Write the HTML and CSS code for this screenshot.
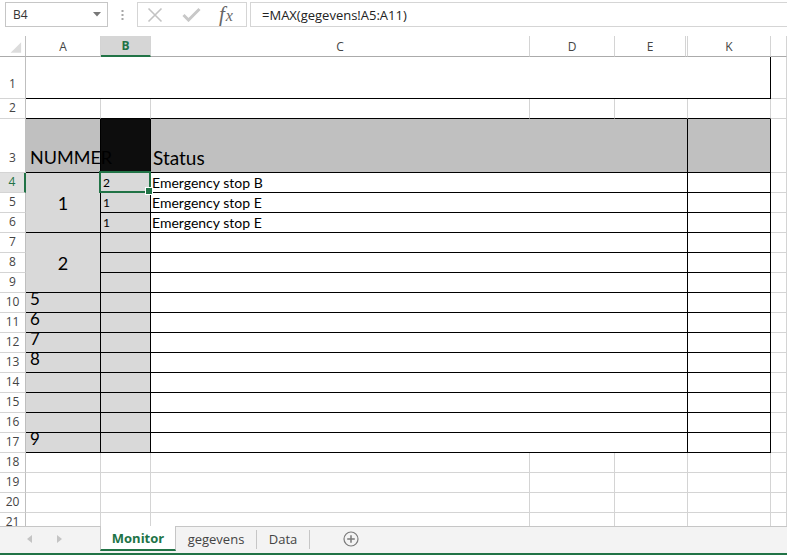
FILE: index.html
```html
<!DOCTYPE html>
<html>
<head>
<meta charset="utf-8">
<link rel="stylesheet" href="styles.css">
</head>
<body>
<div class="app">
  <div class="fbar">
    <div class="namebox"><span>B4</span>
      <svg width="8" height="5" viewBox="0 0 8 5"><polygon points="0,0 8,0 4,4.5" fill="#777"/></svg>
    </div>
    <div class="dots">
      <svg width="3" height="10" viewBox="0 0 3 10"><rect x="0.5" y="0" width="2" height="2" fill="#a6a6a6"/><rect x="0.5" y="4" width="2" height="2" fill="#a6a6a6"/><rect x="0.5" y="8" width="2" height="2" fill="#a6a6a6"/></svg>
    </div>
    <div class="fxbox">
      <svg class="ic-x" width="16" height="16" viewBox="0 0 16 16"><path d="M1.5 1.5 L14.5 14.5 M14.5 1.5 L1.5 14.5" stroke="#c3c3c3" stroke-width="1.6" fill="none"/></svg>
      <svg class="ic-ok" width="19" height="15" viewBox="0 0 19 15"><path d="M1.5 8 L6.5 13 L17.5 2" stroke="#c8c8c8" stroke-width="3" fill="none"/></svg>
      <span class="fx"><i class="f">f</i><i class="x">x</i></span>
    </div>
    <div class="finput">=MAX(gegevens!A5:A11)</div>
  </div>

  <div class="sheet">
    <div class="ch corner"><svg width="26" height="20" viewBox="0 0 26 20"><polygon points="22,6 22,17 11,17" fill="#dcdcdc"/></svg></div>
    <div class="ch">A</div>
    <div class="ch sel">B</div>
    <div class="ch">C</div>
    <div class="ch">D</div>
    <div class="ch">E</div>
    <div class="ch"></div>
    <div class="ch">K</div>
    <div class="ch"></div>

    <div class="rh tall">1</div>
    <div class="c span7 br bb"></div>
    <div class="c"></div>

    <div class="rh">2</div>
    <div class="c bb"></div>
    <div class="c bb"></div>
    <div class="c bb"></div>
    <div class="c bb"></div>
    <div class="c span2 bb"></div>
    <div class="c bb"></div>
    <div class="c"></div>

    <div class="rh tall">3</div>
    <div class="c hd br bb h19 nm over">NUMMER</div>
    <div class="c blk br bb"></div>
    <div class="c hd span4 br bb h19 st">Status</div>
    <div class="c hd br bb"></div>
    <div class="c"></div>

    <div class="rh sel">4</div>
    <div class="c g rs3 br bb mid">1</div>
    <div class="c g br bb sm selcell">2</div>
    <div class="c span4 br bb t14">Emergency stop B</div>
    <div class="c br bb"></div>
    <div class="c"></div>

    <div class="rh">5</div>
    <div class="c g br bb sm">1</div>
    <div class="c span4 br bb t14">Emergency stop E</div>
    <div class="c br bb"></div>
    <div class="c"></div>

    <div class="rh">6</div>
    <div class="c g br bb sm">1</div>
    <div class="c span4 br bb t14">Emergency stop E</div>
    <div class="c br bb"></div>
    <div class="c"></div>

    <div class="rh">7</div>
    <div class="c g rs3 br bb mid">2</div>
    <div class="c g br bb"></div>
    <div class="c span4 br bb"></div>
    <div class="c br bb"></div>
    <div class="c"></div>

    <div class="rh">8</div>
    <div class="c g br bb"></div>
    <div class="c span4 br bb"></div>
    <div class="c br bb"></div>
    <div class="c"></div>

    <div class="rh">9</div>
    <div class="c g br bb"></div>
    <div class="c span4 br bb"></div>
    <div class="c br bb"></div>
    <div class="c"></div>

    <div class="rh">10</div>
    <div class="c g br bb n17">5</div>
    <div class="c g br bb"></div>
    <div class="c span4 br bb"></div>
    <div class="c br bb"></div>
    <div class="c"></div>

    <div class="rh">11</div>
    <div class="c g br bb n17">6</div>
    <div class="c g br bb"></div>
    <div class="c span4 br bb"></div>
    <div class="c br bb"></div>
    <div class="c"></div>

    <div class="rh">12</div>
    <div class="c g br bb n17">7</div>
    <div class="c g br bb"></div>
    <div class="c span4 br bb"></div>
    <div class="c br bb"></div>
    <div class="c"></div>

    <div class="rh">13</div>
    <div class="c g br bb n17">8</div>
    <div class="c g br bb"></div>
    <div class="c span4 br bb"></div>
    <div class="c br bb"></div>
    <div class="c"></div>

    <div class="rh">14</div>
    <div class="c g br bb"></div>
    <div class="c g br bb"></div>
    <div class="c span4 br bb"></div>
    <div class="c br bb"></div>
    <div class="c"></div>

    <div class="rh">15</div>
    <div class="c g br bb"></div>
    <div class="c g br bb"></div>
    <div class="c span4 br bb"></div>
    <div class="c br bb"></div>
    <div class="c"></div>

    <div class="rh">16</div>
    <div class="c g br bb"></div>
    <div class="c g br bb"></div>
    <div class="c span4 br bb"></div>
    <div class="c br bb"></div>
    <div class="c"></div>

    <div class="rh">17</div>
    <div class="c g br bb n17">9</div>
    <div class="c g br bb"></div>
    <div class="c span4 br bb"></div>
    <div class="c br bb"></div>
    <div class="c"></div>

    <div class="rh">18</div>
    <div class="c"></div><div class="c"></div><div class="c"></div><div class="c"></div><div class="c span2"></div><div class="c"></div><div class="c"></div>
    <div class="rh">19</div>
    <div class="c"></div><div class="c"></div><div class="c"></div><div class="c"></div><div class="c span2"></div><div class="c"></div><div class="c"></div>
    <div class="rh">20</div>
    <div class="c"></div><div class="c"></div><div class="c"></div><div class="c"></div><div class="c span2"></div><div class="c"></div><div class="c"></div>
    <div class="rh">21</div>
    <div class="c"></div><div class="c"></div><div class="c"></div><div class="c"></div><div class="c span2"></div><div class="c"></div><div class="c"></div>
  </div>

  <div class="tabs">
    <div class="nav">
      <svg width="6" height="8" viewBox="0 0 6 8"><polygon points="5,0 5,8 0,4" fill="#c4c4c4"/></svg>
      <svg width="6" height="8" viewBox="0 0 6 8"><polygon points="1,0 1,8 6,4" fill="#c4c4c4"/></svg>
    </div>
    <div class="tab active">Monitor</div>
    <div class="tab t-geg">gegevens</div>
    <div class="sep"></div>
    <div class="tab t-data">Data</div>
    <div class="sep"></div>
    <div class="add">
      <svg width="16" height="16" viewBox="0 0 16 16"><circle cx="8" cy="8" r="7" stroke="#7a7a7a" stroke-width="1.2" fill="none"/><path d="M8 4.2 V11.8 M4.2 8 H11.8" stroke="#7a7a7a" stroke-width="1.5"/></svg>
    </div>
  </div>
</div>
</body>
</html>
```

FILE: styles.css
```css
* { box-sizing: border-box; }

body {
  margin: 0;
  width: 787px;
  height: 555px;
  overflow: hidden;
  background: #fff;
  font-family: "Open Sans", "Noto Sans", sans-serif;
}

.app {
  display: flex;
  flex-direction: column;
  height: 555px;
}

/* formula bar */
.fbar {
  flex: none;
  height: 36px;
  display: flex;
  align-items: flex-start;
  padding-top: 2px;
}

.namebox {
  margin-left: 5px;
  width: 103px;
  height: 25px;
  border: 1px solid #c6c6c6;
  display: flex;
  align-items: center;
  justify-content: space-between;
  padding: 0 6px 0 7px;
  font-size: 12px;
  color: #333;
}

.dots {
  width: 29px;
  height: 25px;
  display: flex;
  align-items: center;
  justify-content: center;
}

.fxbox {
  width: 110px;
  height: 25px;
  border: 1px solid #d5d5d5;
  display: flex;
  align-items: center;
}

.ic-x { margin-left: 9px; }
.ic-ok { margin-left: 19px; }

.fx {
  margin-left: 18px;
  font-family: "Liberation Serif", "DejaVu Serif", serif;
  color: #666;
  display: flex;
  align-items: baseline;
  line-height: 1;
}
.fx .f { font-size: 21px; }
.fx .x { font-size: 16px; margin-left: 1px; }

.finput {
  margin-left: 3px;
  flex: 1;
  height: 25px;
  border: 1px solid #d5d5d5;
  border-right: none;
  padding-left: 11px;
  display: flex;
  align-items: center;
  font-size: 13px;
  color: #222;
}

/* sheet grid */
.sheet {
  flex: none;
  height: 490px;
  overflow: hidden;
  display: grid;
  grid-template-columns: 26px 75px 50px 379px 85px 71px 2px 83px 1fr;
  grid-template-rows: 21px 42px 20px 54px repeat(18, 20px);
}

.ch {
  display: flex;
  align-items: center;
  justify-content: center;
  font-size: 12px;
  color: #444;
  border-right: 1px solid #d4d4d4;
  border-bottom: 1px solid #ababab;
}
.ch.corner { border-right-color: #bfbfbf; }
.ch.sel {
  background: #d6d6d6;
  color: #217346;
  font-weight: 700;
  border-bottom: 2px solid #217346;
}

.rh {
  display: flex;
  align-items: flex-end;
  justify-content: center;
  font-size: 12px;
  line-height: 20px;
  color: #444;
  border-right: 1px solid #bfbfbf;
  border-bottom: 1px solid #d4d4d4;
}
.rh.tall { padding-bottom: 4px; }
.rh.sel {
  background: #e1e1e1;
  color: #217346;
  border-right: 2px solid #217346;
}

.c {
  font-family: Lato, "Liberation Sans", sans-serif;
  color: #000;
  display: flex;
  align-items: flex-end;
  padding-left: 2px;
  white-space: nowrap;
  min-width: 0;
  border-right: 1px solid #d4d4d4;
  border-bottom: 1px solid #d4d4d4;
}

.br { border-right-color: #000; }
.bb { border-bottom-color: #000; }

.span2 { grid-column: span 2; }
.span4 { grid-column: span 4; }
.span7 { grid-column: span 7; }
.rs3 { grid-row: span 3; }

.hd { background: #c0c0c0; }
.blk { background: #0d0d0d; }
.g { background: #d9d9d9; }

.h19 {
  font-size: 19px;
  padding-left: 4px;
  padding-bottom: 3px;
}
.h19.nm { font-size: 18px; padding-bottom: 4px; }
.h19.st { padding-left: 2px; }
.over { z-index: 1; }

.t14 {
  font-size: 14px;
  padding-left: 1px;
  padding-bottom: 1px;
}

.sm {
  font-size: 12px;
  padding-left: 2px;
  padding-bottom: 2px;
}

.n17 {
  font-size: 17px;
  padding-left: 4px;
  padding-bottom: 3px;
}

.mid {
  align-items: center;
  justify-content: center;
  font-size: 18px;
  padding: 0;
}

.selcell {
  position: relative;
  z-index: 2;
}
.selcell::after {
  content: "";
  position: absolute;
  left: -2px;
  top: -2px;
  right: -1px;
  bottom: -1px;
  border: 2px solid #217346;
}
.selcell::before {
  content: "";
  position: absolute;
  right: -3px;
  bottom: -3px;
  width: 6px;
  height: 6px;
  background: #217346;
  border: 1px solid #fff;
  z-index: 3;
}

/* sheet tabs */
.tabs {
  flex: none;
  height: 29px;
  background: #f3f3f3;
  border-top: 1px solid #c6c6c6;
  border-bottom: 2px solid #217346;
  display: flex;
  align-items: flex-start;
  font-size: 13px;
}

.nav {
  width: 100px;
  height: 24px;
  display: flex;
  align-items: center;
  padding-left: 27px;
  gap: 23px;
}

.tab {
  height: 24px;
  display: flex;
  align-items: center;
  justify-content: center;
  color: #444;
}
.tab.active {
  width: 76px;
  height: 25px;
  margin-top: -1px;
  background: #fff;
  border: 1px solid #c6c6c6;
  border-top: none;
  border-bottom: 2px solid #217346;
  color: #217346;
  font-weight: 700;
}
.t-geg { width: 80px; }
.t-data { width: 52px; }

.sep {
  width: 1px;
  height: 19px;
  margin-top: 3px;
  background: #c6c6c6;
}

.add {
  margin-left: 33px;
  height: 24px;
  display: flex;
  align-items: center;
}
```
